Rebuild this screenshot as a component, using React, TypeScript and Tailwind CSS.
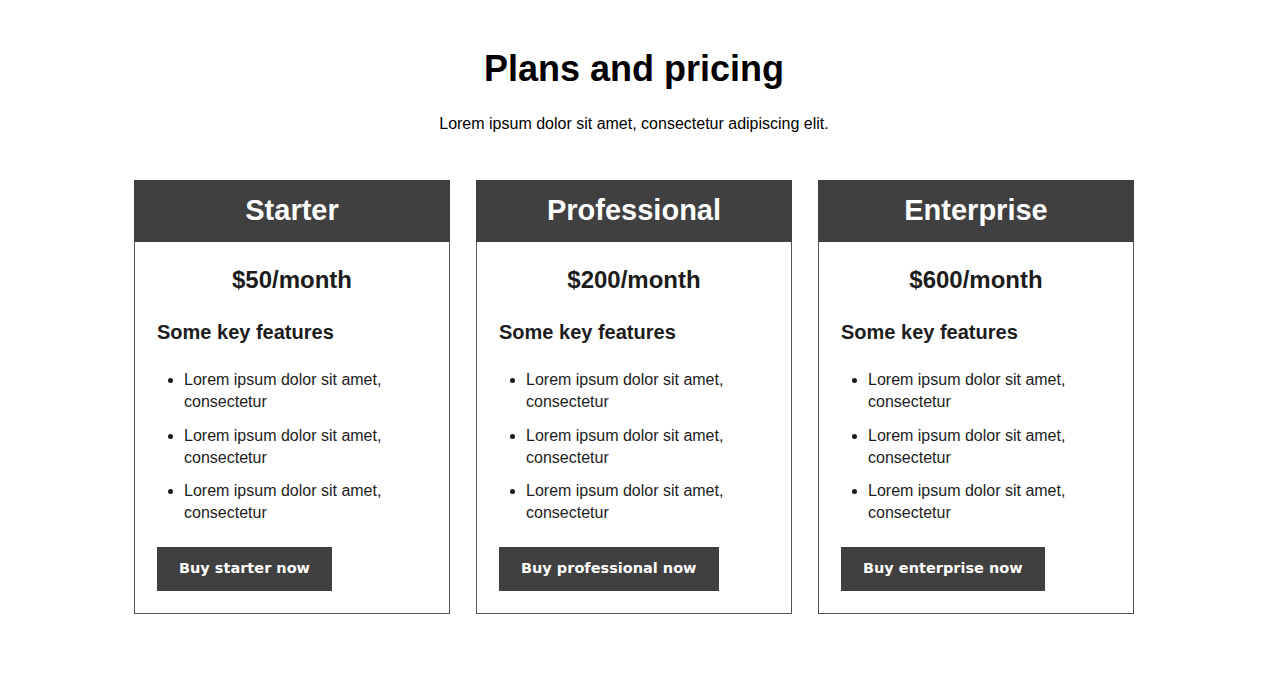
import React from 'react';

const plans = [
  { name: 'Starter', price: '$50/month', cta: 'Buy starter now' },
  { name: 'Professional', price: '$200/month', cta: 'Buy professional now' },
  { name: 'Enterprise', price: '$600/month', cta: 'Buy enterprise now' },
];

const features = [
  'Lorem ipsum dolor sit amet, consectetur',
  'Lorem ipsum dolor sit amet, consectetur',
  'Lorem ipsum dolor sit amet, consectetur',
];

export default function App() {
  return (
    <div className="min-h-screen bg-white font-['Liberation_Sans',Arial,sans-serif]">
      <div className="pt-[47px] pl-[134px]">
        <div className="w-[1000px]">
          <h1 className="text-center text-[36px] leading-[44px] font-bold text-black">Plans and pricing</h1>
          <p className="mt-[23px] text-center text-[16px] leading-[20px] text-black">
            Lorem ipsum dolor sit amet, consectetur adipiscing elit.
          </p>

          <div className="mt-[46px] flex gap-[26px]">
            {plans.map((plan) => (
              <div key={plan.name} className="w-[316px] border border-[#555555]">
                <div className="-mx-px -mt-px flex h-[62px] items-center justify-center bg-[#404040]">
                  <h2 className="text-[29px] font-bold text-white">{plan.name}</h2>
                </div>
                <div className="flex flex-col gap-[23px] px-[22px] pt-[23px] pb-[22px] text-[#1c1c1c]">
                  <div className="text-center text-[24px] leading-[30px] font-bold">{plan.price}</div>
                  <h3 className="text-[20px] leading-[28px] font-bold">Some key features</h3>
                  <ul className="flex list-disc flex-col gap-[11.5px] pl-[27px] pr-[20px] text-[16px] leading-[22px]">
                    {features.map((f, i) => (
                      <li key={i}>{f}</li>
                    ))}
                  </ul>
                  <div>
                    <button className="h-[44px] bg-[#404040] px-[22px] font-['DejaVu_Sans',sans-serif] text-[14.5px] font-bold text-white">
                      {plan.cta}
                    </button>
                  </div>
                </div>
              </div>
            ))}
          </div>
        </div>
      </div>
    </div>
  );
}
